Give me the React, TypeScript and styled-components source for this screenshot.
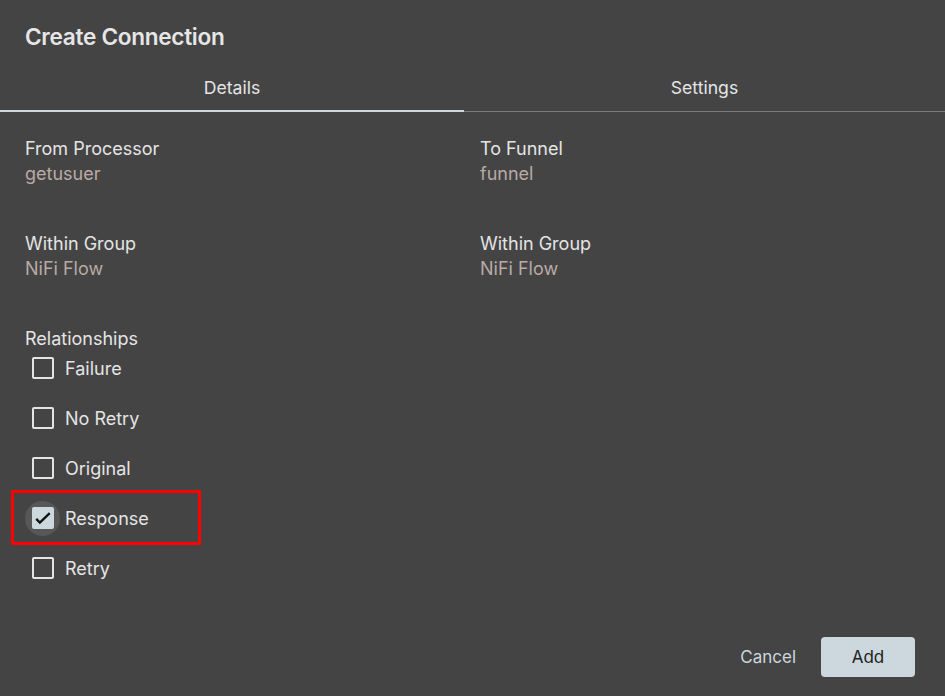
import React, { useState } from "react";
import styled, { createGlobalStyle } from "styled-components";

const GlobalStyle = createGlobalStyle`
  html, body {
    margin: 0;
    padding: 0;
    background: #444444;
  }
  body {
    font-family: Inter, "Noto Sans", sans-serif;
    color: #e4e4e4;
  }
`;

const Dialog = styled.div`
  width: 945px;
  height: 696px;
  background: #444444;
  display: flex;
  flex-direction: column;
  box-sizing: border-box;
  position: relative;
`;

const Title = styled.h2`
  margin: 0;
  padding: 24px 25px 0;
  height: 40px;
  font-size: 22.6px;
  font-weight: 600;
  line-height: 26px;
  letter-spacing: -0.3px;
  color: #e6e6e6;
`;

const TabBar = styled.div`
  display: flex;
  height: 47px;
  border-bottom: 1px solid #7a7a7a;
`;

const Tab = styled.div<{ $active?: boolean }>`
  width: ${(p) => (p.$active ? "464px" : "auto")};
  flex: ${(p) => (p.$active ? "none" : "1")};
  display: flex;
  align-items: center;
  justify-content: center;
  font-size: 17.6px;
  color: #e4e4e4;
  margin-bottom: -1px;
  border-bottom: ${(p) => (p.$active ? "2px solid #ccd8de" : "2px solid transparent")};
  box-sizing: border-box;
`;

const Body = styled.div`
  flex: 1;
  padding: 27px 25px 0;
  display: flex;
  flex-direction: column;
`;

const Row = styled.div`
  display: grid;
  grid-template-columns: 455px 1fr;
  margin-bottom: 50px;
`;

const Field = styled.div`
  display: flex;
  flex-direction: column;
  gap: 5px;
`;

const Label = styled.div`
  font-size: 18px;
  line-height: 20px;
  color: #e4e4e4;
`;

const Value = styled.div`
  font-size: 18px;
  line-height: 20px;
  color: #b9aaa6;
`;

const Relationships = styled.div`
  display: flex;
  flex-direction: column;
`;

const CheckRow = styled.label`
  display: flex;
  align-items: center;
  height: 50px;
  gap: 5px;
  font-size: 18px;
  color: #e4e4e4;
  cursor: pointer;
  position: relative;
`;

const FirstCheckRow = styled(CheckRow)`
  margin-top: -6px;
`;

const Halo = styled.span<{ $on?: boolean }>`
  width: 35px;
  height: 35px;
  border-radius: 50%;
  display: flex;
  align-items: center;
  justify-content: center;
  background: ${(p) => (p.$on ? "rgba(255,255,255,0.1)" : "transparent")};
`;

const Box = styled.span<{ $on?: boolean }>`
  width: 22px;
  height: 22px;
  box-sizing: border-box;
  border-radius: 2px;
  border: 2px solid ${(p) => (p.$on ? "#ccd8de" : "#e4e4e4")};
  background: ${(p) => (p.$on ? "#ccd8de" : "transparent")};
  display: flex;
  align-items: center;
  justify-content: center;
`;

const Highlight = styled.div`
  position: absolute;
  left: 11px;
  top: 490px;
  width: 190px;
  height: 55px;
  border: 3px solid #ff0000;
  box-sizing: border-box;
  pointer-events: none;
`;

const Footer = styled.div`
  display: flex;
  justify-content: flex-end;
  align-items: center;
  gap: 25px;
  padding: 0 30px 19px 0;
`;

const TextButton = styled.button`
  background: none;
  border: none;
  font-family: inherit;
  font-size: 17px;
  color: #ccd8de;
  padding: 0;
`;

const FilledButton = styled.button`
  width: 94px;
  height: 40px;
  border: none;
  border-radius: 4px;
  background: #ccd8de;
  color: #222222;
  font-family: inherit;
  font-size: 17px;
`;

const rels = ["Failure", "No Retry", "Original", "Response", "Retry"];

const App = () => {
  const [checked, setChecked] = useState<string[]>(["Response"]);

  const toggle = (r: string) =>
    setChecked((c) => (c.includes(r) ? c.filter((x) => x !== r) : [...c, r]));

  return (
    <>
      <GlobalStyle />
      <Dialog>
        <Title>Create Connection</Title>
        <TabBar>
          <Tab $active>Details</Tab>
          <Tab>Settings</Tab>
        </TabBar>
        <Body>
          <Row>
            <Field>
              <Label>From Processor</Label>
              <Value>getusuer</Value>
            </Field>
            <Field>
              <Label>To Funnel</Label>
              <Value>funnel</Value>
            </Field>
          </Row>
          <Row>
            <Field>
              <Label>Within Group</Label>
              <Value>NiFi Flow</Value>
            </Field>
            <Field>
              <Label>Within Group</Label>
              <Value>NiFi Flow</Value>
            </Field>
          </Row>
          <Relationships>
            <Label>Relationships</Label>
            {rels.map((r, i) => {
              const on = checked.includes(r);
              const Comp = i === 0 ? FirstCheckRow : CheckRow;
              return (
                <Comp key={r} onClick={() => toggle(r)}>
                  <Halo $on={on}>
                    <Box $on={on}>
                      {on && (
                        <svg width="20" height="20" viewBox="0 0 20 20">
                          <path d="M2.5 11 L6.5 15 L17.5 4.5" fill="none" stroke="#111" strokeWidth="2.6" />
                        </svg>
                      )}
                    </Box>
                  </Halo>
                  {r}
                </Comp>
              );
            })}
          </Relationships>
        </Body>
        <Footer>
          <TextButton>Cancel</TextButton>
          <FilledButton>Add</FilledButton>
        </Footer>
        <Highlight />
      </Dialog>
    </>
  );
};

export default App;
